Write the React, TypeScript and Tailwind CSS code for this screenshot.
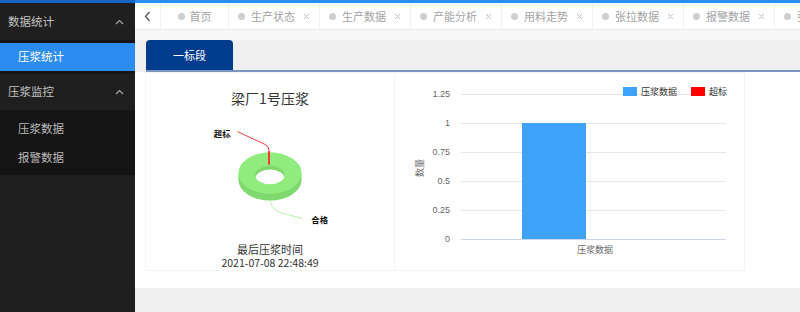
import React from 'react'

const tabs = ['生产状态', '生产数据', '产能分析', '用料走势', '张拉数据', '报警数据', '张拉统计']

function Chevron() {
  return (
    <svg width="9" height="6" viewBox="0 0 9 6" className="shrink-0">
      <polyline points="1,5 4.5,1.5 8,5" fill="none" stroke="#a8a8a8" strokeWidth="1.2" />
    </svg>
  )
}

function Cross() {
  return (
    <svg width="7" height="7" viewBox="0 0 7 7" className="shrink-0">
      <path d="M1 1L6 6M6 1L1 6" stroke="#c0c0c0" strokeWidth="1" />
    </svg>
  )
}

function Sidebar() {
  return (
    <div className="flex w-[135px] shrink-0 flex-col bg-[#1f1f1f] text-[11.5px]">
      <div className="h-[3px] bg-[#1565c0]" />
      <div className="flex h-[37px] items-center justify-between pl-[8px] pr-[11px] text-[#c4c4c4]">
        <span>数据统计</span>
        <Chevron />
      </div>
      <div className="bg-[#151515] py-[3px]">
        <div className="flex h-[28px] items-center bg-[#2d8cf0] pl-[18px] text-white">压浆统计</div>
      </div>
      <div className="flex h-[36px] items-center justify-between pl-[8px] pr-[11px] text-[#c4c4c4]">
        <span>压浆监控</span>
        <Chevron />
      </div>
      <div className="bg-[#141414] pt-[4px] pb-[3px] text-[#bdbdbd]">
        <div className="flex h-[29px] items-center pl-[18px]">压浆数据</div>
        <div className="flex h-[29px] items-center pl-[18px]">报警数据</div>
      </div>
    </div>
  )
}

function TabBar() {
  return (
    <div className="flex h-[27px] shrink-0 items-stretch overflow-hidden border-b border-[#ececec] bg-white text-[11px] text-[#a3a3a3]">
      <div className="flex w-[26px] shrink-0 items-center justify-center border-r border-[#f0f0f0]">
        <svg width="7" height="11" viewBox="0 0 7 11">
          <polyline points="5.5,1 1.5,5.5 5.5,10" fill="none" stroke="#555" strokeWidth="1.3" />
        </svg>
      </div>
      <div className="flex w-[68px] shrink-0 items-center justify-center gap-[5px] border-r border-[#f0f0f0]">
        <span className="h-[7px] w-[7px] rounded-full bg-[#cfcfcf]" />
        <span>首页</span>
      </div>
      {tabs.map((t) => (
        <div key={t} className="flex w-[91px] shrink-0 items-center justify-center gap-[6px] border-r border-[#f0f0f0]">
          <span className="h-[7px] w-[7px] rounded-full bg-[#cfcfcf]" />
          <span>{t}</span>
          <span className="ml-[2px]">
            <Cross />
          </span>
        </div>
      ))}
    </div>
  )
}

function Donut() {
  const cx = 125
  const cy = 66
  return (
    <svg width="250" height="136" viewBox="0 0 250 136">
      <defs>
        <clipPath id="hole">
          <ellipse cx={cx} cy={cy + 2} rx="15" ry="9.5" />
        </clipPath>
      </defs>
      <ellipse cx={cx} cy={cy + 7} rx="32" ry="21" fill="#7fd86d" />
      <rect x={cx - 32} y={cy} width="64" height="7" fill="#7fd86d" />
      <ellipse cx={cx} cy={cy} rx="32" ry="21" fill="#90ed7d" />
      <ellipse cx={cx} cy={cy + 2} rx="15" ry="9.5" fill="#7fd86d" />
      <ellipse cx={cx} cy={cy + 6} rx="15" ry="9.5" fill="#ffffff" clipPath="url(#hole)" />
      <path d="M92 24 L120 37 Q124 39 124 43 L124 58" fill="none" stroke="#f23b3b" strokeWidth="1" />
      <line x1="124" y1="44" x2="124" y2="57" stroke="#f23b3b" strokeWidth="2" />
      <path d="M125 94 Q127 104 138 107 L158 112" fill="none" stroke="#b4f2a8" strokeWidth="1" />
      <text x="68" y="29" fontSize="8.5" fontWeight="700" fill="#111" fontFamily="'Noto Sans CJK SC', sans-serif">
        超标
      </text>
      <text x="167" y="117" fontSize="8.5" fontWeight="700" fill="#111" fontFamily="'Noto Sans CJK SC', sans-serif">
        合格
      </text>
    </svg>
  )
}

function BarChart() {
  const ticks = [
    { l: '1.25', y: 21 },
    { l: '1', y: 50 },
    { l: '0.75', y: 79 },
    { l: '0.5', y: 108 },
    { l: '0.25', y: 137 },
  ]
  const font = "'Liberation Sans', 'Noto Sans CJK SC', sans-serif"
  return (
    <svg width="349" height="199" viewBox="0 0 349 199">
      {ticks.map((t) => (
        <g key={t.l}>
          <line x1="66" x2="331" y1={t.y + 0.5} y2={t.y + 0.5} stroke="#e6e6e6" />
          <text x="55" y={t.y + 3} textAnchor="end" fontSize="9" fill="#666" fontFamily={font}>
            {t.l}
          </text>
        </g>
      ))}
      <line x1="66" x2="331" y1="166.5" y2="166.5" stroke="#ccd6eb" />
      <text x="55" y="169" textAnchor="end" fontSize="9" fill="#666" fontFamily={font}>
        0
      </text>
      <rect x="127" y="50" width="64" height="116" fill="#3fa3fb" />
      <text x="200" y="180" textAnchor="middle" fontSize="9" fill="#666" fontFamily={font}>
        压浆数据
      </text>
      <text
        x="28"
        y="95"
        textAnchor="middle"
        fontSize="9"
        fill="#666"
        fontFamily={font}
        transform="rotate(-90 28 95)"
      >
        数量
      </text>
      <rect x="228" y="14" width="14" height="9" fill="#3fa3fb" />
      <text x="246" y="22" fontSize="9" fill="#333" fontFamily={font}>
        压浆数据
      </text>
      <rect x="296" y="14" width="14" height="9" fill="#ff0000" />
      <text x="314" y="22" fontSize="9" fill="#333" fontFamily={font}>
        超标
      </text>
    </svg>
  )
}

export default function App() {
  return (
    <div
      className="flex h-[312px] w-[800px] overflow-hidden bg-[#f0f0f0]"
      style={{ fontFamily: "'Noto Sans CJK SC', 'Liberation Sans', sans-serif" }}
    >
      <Sidebar />
      <div className="flex min-w-0 flex-1 flex-col">
        <div className="h-[3px] shrink-0 bg-[#2d8cf0]" />
        <TabBar />
        <div className="h-[10px] shrink-0 bg-[#f7f7f7]" />
        <div className="flex h-[30px] shrink-0 items-end pl-[11px]">
          <div className="flex h-[30px] w-[87px] items-center justify-center rounded-t-[4px] bg-[#023c8c] text-[11px] text-white">
            一标段
          </div>
        </div>
        <div className="ml-[11px] h-[2px] shrink-0 bg-[#7b94c0]" />
        <div className="flex h-[216px] shrink-0 bg-white pb-[17px] pl-[10px]">
          <div className="flex w-[250px] flex-col items-center border border-[#f4f4f4] pt-[15px] text-[#333]">
            <div className="h-[20px] text-[14px] leading-[20px]">梁厂1号压浆</div>
            <Donut />
            <div className="text-[11px] leading-[14px]">最后压浆时间</div>
            <div className="text-[10.5px] leading-[14px]">2021-07-08 22:48:49</div>
          </div>
          <div className="w-[350px] border border-l-0 border-[#f4f4f4]">
            <BarChart />
          </div>
        </div>
      </div>
    </div>
  )
}
